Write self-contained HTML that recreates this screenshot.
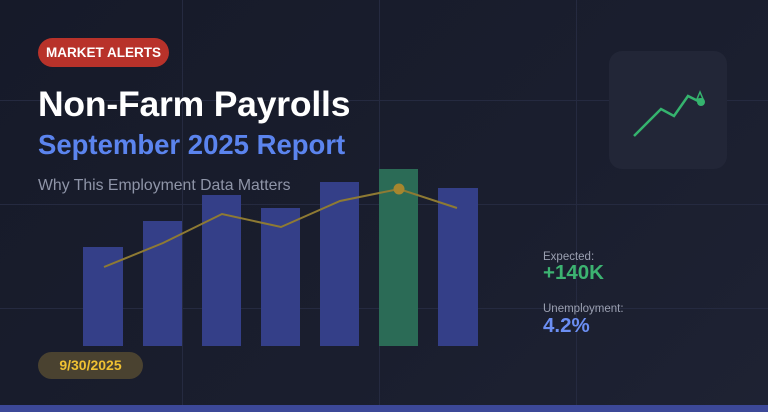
<!DOCTYPE html>
<html><head><meta charset="utf-8"><style>
html,body{margin:0;padding:0}
body{width:768px;height:412px;overflow:hidden;position:relative;background:linear-gradient(135deg,#161a29 0%,#1a1e2e 60%,#1e2233 100%);font-family:"Liberation Sans",sans-serif}
.abs{position:absolute}
.badge{left:38px;top:38px;width:131px;height:29px;border-radius:15px;background:#b8322a;color:#fff;font-weight:bold;font-size:13.5px;line-height:29px;text-align:center}
.title{left:38px;top:83px;color:#fff;font-weight:bold;font-size:35.5px;line-height:42px;letter-spacing:-0.2px;white-space:nowrap}
.sub{left:38px;top:129px;color:#5b84ee;font-weight:bold;font-size:27.5px;line-height:32px;white-space:nowrap}
.tag{left:38px;top:176px;color:#8f95a8;font-size:15.8px;line-height:20px;white-space:nowrap}
.iconbox{left:609px;top:51px;width:118px;height:118px;border-radius:13px;background:#222637}
.lbl{color:#9ba0b1;font-size:11.5px;line-height:13px;left:543px}
.val{font-weight:bold;font-size:20.5px;line-height:20px;left:543px}
.date{left:38px;top:352px;width:105px;height:27px;border-radius:14px;background:#4a4230;color:#f0c132;font-weight:bold;font-size:14px;line-height:27px;text-align:center}
.bottom{left:0;top:405px;width:768px;height:7px;background:#3c4898}
</style></head><body>
<svg class="abs" style="left:0;top:0" width="768" height="412">
<g stroke="#252a40" stroke-width="1">
<line x1="0" y1="100.5" x2="768" y2="100.5"/><line x1="0" y1="204.5" x2="768" y2="204.5"/><line x1="0" y1="308.5" x2="768" y2="308.5"/>
<line x1="182.5" y1="0" x2="182.5" y2="412"/><line x1="379.5" y1="0" x2="379.5" y2="412"/><line x1="576.5" y1="0" x2="576.5" y2="412"/>
</g>
<g fill="#343f88">
<rect x="83" y="247" width="40" height="99"/>
<rect x="143" y="221" width="39" height="125"/>
<rect x="202" y="195" width="39" height="151"/>
<rect x="261" y="208" width="39" height="138"/>
<rect x="320" y="182" width="39" height="164"/>
<rect x="438" y="188" width="40" height="158"/>
</g>
<rect x="379" y="169" width="39" height="177" fill="#2b6b56"/>
<polyline points="104,267 163,243 222,214 281,227 340,201 399,189 457,208" fill="none" stroke="#8e7a33" stroke-width="2"/>
<circle cx="399" cy="189" r="5.5" fill="#a6862e"/>
</svg>
<div class="abs badge">MARKET ALERTS</div>
<div class="abs title">Non-Farm Payrolls</div>
<div class="abs sub">September 2025 Report</div>
<div class="abs tag">Why This Employment Data Matters</div>
<div class="abs iconbox"></div>
<svg class="abs" style="left:0;top:0" width="768" height="412">
<polyline points="634,136 661,109 674,116 688,96 700,102" fill="none" stroke="#35b36e" stroke-width="2.5" stroke-linejoin="miter"/>
<circle cx="701" cy="102" r="4" fill="#35b36e"/>
<path d="M700,92 L697,99 L703,99 Z" fill="none" stroke="#35b36e" stroke-width="1.5"/>
</svg>
<div class="abs lbl" style="top:251px">Expected:</div>
<div class="abs val" style="top:263px;color:#3cb371">+140K</div>
<div class="abs lbl" style="top:303px">Unemployment:</div>
<div class="abs val" style="top:316px;color:#6b8ef2">4.2%</div>
<div class="abs date">9/30/2025</div>
<div class="abs bottom"></div>
</body></html>
